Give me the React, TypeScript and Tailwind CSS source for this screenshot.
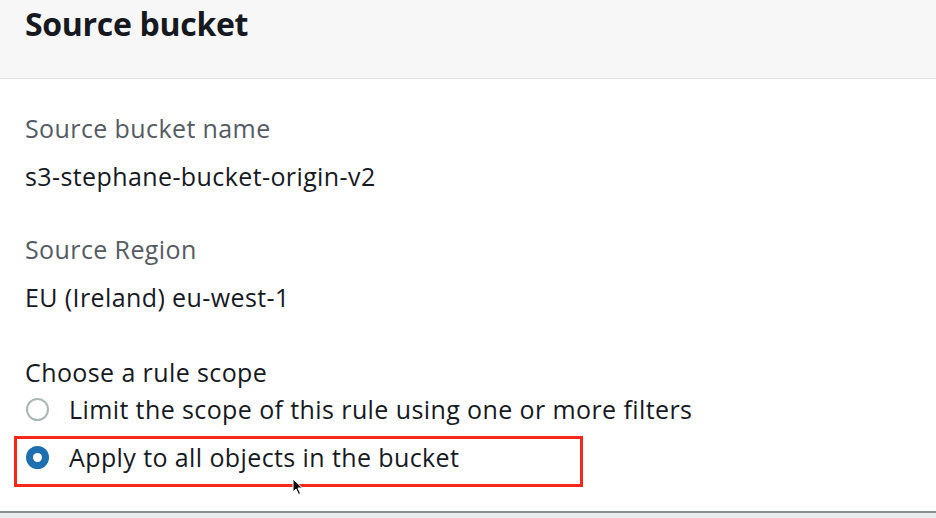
export default function App() {
  const font = { fontFamily: '"Open Sans", "Noto Sans", Arial, sans-serif' };
  return (
    <div className="w-[936px] h-[518px] bg-[#eaeded] overflow-hidden relative" style={font}>
      <div className="bg-white h-[513px] border-b-2 border-[#86918d] flex flex-col">
        <div className="h-[79px] bg-[#f7f7f7] border-b border-[#e3e4e4] pl-[25px] pt-[2px]">
          <h2 className="text-[32px] leading-[44px] font-bold text-[#16191f] tracking-[-0.3px]">Source bucket</h2>
        </div>
        <div className="flex flex-col pl-[25px] text-[25px] leading-[32px] tracking-[0.4px]">
          <div className="mt-[33px] text-[#545b64]">Source bucket name</div>
          <div className="mt-[16px] text-[#16191f]">s3-stephane-bucket-origin-v2</div>
          <div className="mt-[41px] text-[#545b64]">Source Region</div>
          <div className="mt-[16px] text-[#16191f]">EU (Ireland) eu-west-1</div>
          <div className="mt-[43px] text-[#16191f]">Choose a rule scope</div>
          <label className="mt-[5px] flex items-center gap-[20px] text-[#16191f]">
            <span className="w-[23px] h-[23px] rounded-full border-2 border-[#aab7b8] bg-white ml-[1px]"></span>
            <span>Limit the scope of this rule using one or more filters</span>
          </label>
          <label className="mt-[16px] flex items-center gap-[20px] text-[#16191f]">
            <span className="w-[23px] h-[23px] rounded-full bg-[#1d6fb0] flex items-center justify-center ml-[1px]">
              <span className="w-[9px] h-[9px] rounded-full bg-white"></span>
            </span>
            <span>Apply to all objects in the bucket</span>
          </label>
        </div>
      </div>
      <div className="absolute left-[14px] top-[436px] w-[569px] h-[51px] border-[3px] border-[#f5281a]"></div>
      <svg className="absolute left-[292px] top-[478px]" width="12" height="18" viewBox="0 0 12 18">
        <path d="M1 1 L1 14 L4 11 L6.5 16.5 L8.5 15.5 L6 10 L10.5 10 Z" fill="#111" stroke="#fff" strokeWidth="1" />
      </svg>
    </div>
  );
}
